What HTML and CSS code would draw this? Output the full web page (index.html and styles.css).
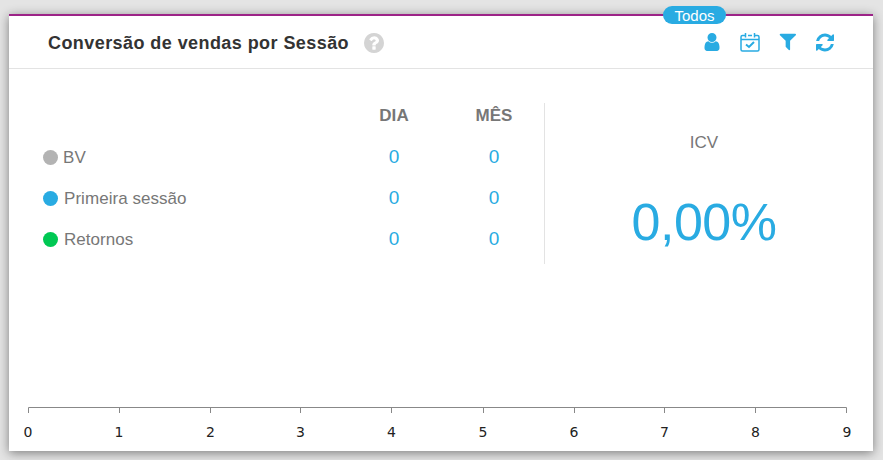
FILE: index.html
```html
<!DOCTYPE html>
<html lang="en">
<head>
<meta charset="UTF-8">
<meta name="viewport" content="width=device-width, initial-scale=1.0">
<title>Conversão de vendas por Sessão</title>
<link rel="stylesheet" href="styles.css">
</head>
<body>

<div class="card">
  <span class="badge">Todos</span>

  <header class="card-header">
    <h2>Conversão de vendas por Sessão</h2>
    <svg class="help-icon" viewBox="128 128 1536 1536"><path d="M1024 1376v-192q0-14-9-23t-23-9h-192q-14 0-23 9t-9 23v192q0 14 9 23t23 9h192q14 0 23-9t9-23zm256-672q0-88-55.5-163t-138.5-116-170-41q-243 0-371 213-15 24 8 42l132 100q7 6 19 6 16 0 25-12 53-68 86-92 34-24 86-24 48 0 85.5 26t37.5 59q0 38-20 61t-68 45q-63 28-115.5 86.5t-52.5 125.5v36q0 14 9 23t23 9h192q14 0 23-9t9-23q0-19 21.5-49.5t54.5-49.5q32-18 49-28.5t46-35 44.5-48 28-60.5 12.5-81zm384 192q0 209-103 385.5t-279.5 279.5-385.5 103-385.5-103-279.5-279.5-103-385.5 103-385.5 279.5-279.5 385.5-103 385.5 103 279.5 279.5 103 385.5z"/></svg>
    <div class="tools">
      <svg class="tool tool-user" viewBox="256 128 1280 1536"><path d="M1536 1399q0 109-62.5 187t-150.5 78h-854q-88 0-150.5-78t-62.5-187q0-85 8.5-160.5t31.5-152 58.5-131 94-89 134.5-34.5q131 128 313 128t313-128q76 0 134.5 34.5t94 89 58.5 131 31.5 152 8.5 160.5zm-256-887q0 159-112.5 271.5t-271.5 112.5-271.5-112.5-112.5-271.5 112.5-271.5 271.5-112.5 271.5 112.5 112.5 271.5z"/></svg>
      <svg class="tool tool-calendar" viewBox="0 0 20 20">
        <path d="M5.500 3.500H2.500Q1 3.500 1 5V17.500Q1 19 2.500 19H17.500Q19 19 19 17.500V5Q19 3.500 17.500 3.500H14.500M8 3.500H12" class="cal-line"/>
        <path d="M1 7.500h18M5.500 1v4.500M14.500 1v4.500" class="cal-line"/>
        <path d="M6 12.500l3 2.500 5-5" class="cal-check"/>
      </svg>
      <svg class="tool tool-filter" viewBox="128 256 1472 1408"><path d="M1595 295q17 41-14 70l-493 493v742q0 42-39 59-13 5-25 5-27 0-45-19l-256-256q-19-19-19-45v-486l-493-493q-31-29-14-70 17-39 59-39h1280q42 0 59 39z"/></svg>
      <svg class="tool tool-refresh" viewBox="128 128 1536 1536"><path d="M1639 1056q0 5-1 7-64 268-268 434.5t-478 166.5q-146 0-282.5-55t-243.5-157l-129 129q-19 19-45 19t-45-19-19-45v-448q0-26 19-45t45-19h448q26 0 45 19t19 45-19 45l-137 137q71 66 161 102t187 36q134 0 250-65t186-179q11-17 53-117 8-23 30-23h192q13 0 22.5 9.5t9.5 22.5zm25-800v448q0 26-19 45t-45 19h-448q-26 0-45-19t-19-45 19-45l138-138q-148-137-349-137-134 0-250 65t-186 179q-11 17-53 117-8 23-30 23h-199q-13 0-22.5-9.5t-9.5-22.5v-7q65-268 270-434.5t480-166.5q146 0 284 55.5t245 156.5l130-129q19-19 45-19t45 19 19 45z"/></svg>
    </div>
  </header>

  <div class="stats">
    <div class="sessions">
      <div class="row row-head">
        <span class="label"></span>
        <span class="col">DIA</span>
        <span class="col">MÊS</span>
      </div>
      <div class="row">
        <span class="label label-bv"><i class="dot dot-gray"></i>BV</span>
        <span class="col value">0</span>
        <span class="col value">0</span>
      </div>
      <div class="row">
        <span class="label"><i class="dot dot-blue"></i>Primeira sessão</span>
        <span class="col value">0</span>
        <span class="col value">0</span>
      </div>
      <div class="row">
        <span class="label"><i class="dot dot-green"></i>Retornos</span>
        <span class="col value">0</span>
        <span class="col value">0</span>
      </div>
    </div>
    <div class="icv">
      <div class="icv-title">ICV</div>
      <div class="icv-value">0,00%</div>
    </div>
  </div>

  <svg class="axis" viewBox="0 0 864 56">
    <path class="axis-line" d="M19.500 18V12.500H837.500V18"/>
    <path class="axis-tick" d="M110.500 12.500V18M201.500 12.500V18M291.500 12.500V18M382.500 12.500V18M474.500 12.500V18M565.500 12.500V18M655.500 12.500V18M746.500 12.500V18"/>
    <g class="axis-text">
      <text x="19" y="42">0</text>
      <text x="110" y="42">1</text>
      <text x="201.500" y="42">2</text>
      <text x="291.500" y="42">3</text>
      <text x="382.500" y="42">4</text>
      <text x="474" y="42">5</text>
      <text x="565" y="42">6</text>
      <text x="655.500" y="42">7</text>
      <text x="746.500" y="42">8</text>
      <text x="838" y="42">9</text>
    </g>
  </svg>
</div>

</body>
</html>
```

FILE: styles.css
```css
html, body {
  height: 100%;
}
body {
  font-family: "Liberation Sans", Arial, sans-serif;
  margin: 0;
  padding: 14px 10px 9px 9px;
  box-sizing: border-box;
  background-color: #e4e4e4;
  overflow: hidden;
}
.card {
  position: relative;
  height: 437px;
  background-color: #fff;
  border-top: 2px solid #9c2387;
  box-sizing: border-box;
  box-shadow: 0 2px 10px rgba(0, 0, 0, 0.45);
  display: flex;
  flex-direction: column;
}
.badge {
  position: absolute;
  top: -10px;
  left: 654px;
  width: 63px;
  height: 18px;
  line-height: 19px;
  text-align: center;
  background-color: #29abe2;
  color: #fff;
  font-size: 15px;
  border-radius: 9px;
}
.card-header {
  height: 52px;
  padding: 0 38px 0 39px;
  border-bottom: 1px solid #e3e3e3;
  display: flex;
  align-items: center;
}
.card-header h2 {
  margin: 0;
  font-size: 18px;
  font-weight: bold;
  letter-spacing: 0.43px;
  color: #333;
  position: relative;
  top: 1px;
}
.help-icon {
  width: 20px;
  height: 20px;
  margin-left: 15px;
  fill: #d4d4d4;
  position: relative;
  top: 1px;
}
.tools {
  margin-left: auto;
  display: flex;
  align-items: center;
}
.tool {
  display: block;
  fill: #29abe2;
}
.tool-user {
  width: 16px;
  height: 18px;
  margin-right: 20px;
}
.tool-calendar {
  width: 20px;
  height: 20px;
  margin-right: 19px;
}
.cal-line {
  fill: none;
  stroke: #29abe2;
  stroke-width: 1.500;
}
.cal-check {
  fill: none;
  stroke: #29abe2;
  stroke-width: 2;
}
.tool-filter {
  width: 17px;
  height: 18px;
  margin-right: 20px;
}
.tool-refresh {
  width: 18px;
  height: 19px;
  margin-right: 1px;
}
.stats {
  flex: 1;
  display: flex;
  padding: 34px 0 0 34px;
  align-items: flex-start;
}
.sessions {
  width: 501px;
  height: 161px;
  border-right: 1px solid #e3e3e3;
}
.row {
  display: flex;
  align-items: center;
  height: 41px;
  font-size: 17px;
  letter-spacing: 0.05px;
  color: #777;
}
.row-head {
  height: 26px;
  margin-bottom: 8px;
  font-size: 17px;
  font-weight: bold;
}
.label {
  width: 301px;
  display: flex;
  align-items: center;
}
.label-bv .dot {
  margin-right: 5px;
}
.dot {
  width: 15px;
  height: 15px;
  border-radius: 50%;
  margin-right: 6px;
}
.dot-gray {
  background-color: #b3b3b3;
}
.dot-blue {
  background-color: #29abe2;
}
.dot-green {
  background-color: #00c853;
}
.col {
  width: 100px;
  text-align: center;
}
.value {
  color: #29abe2;
  font-size: 19px;
  padding-bottom: 2px;
}
.icv {
  flex: 1;
  margin-right: 10px;
  text-align: center;
}
.icv-title {
  margin-top: 30px;
  font-size: 17px;
  color: #777;
}
.icv-value {
  margin-top: 39px;
  font-size: 52px;
  letter-spacing: -0.5px;
  color: #29abe2;
}
.axis {
  display: block;
  width: 864px;
  height: 56px;
  flex: none;
}
.axis-line, .axis-tick {
  fill: none;
  stroke: #888;
  stroke-width: 1;
}
.axis-text text {
  font-family: "DejaVu Sans", sans-serif;
  font-size: 14px;
  fill: #222;
  text-anchor: middle;
}
```
